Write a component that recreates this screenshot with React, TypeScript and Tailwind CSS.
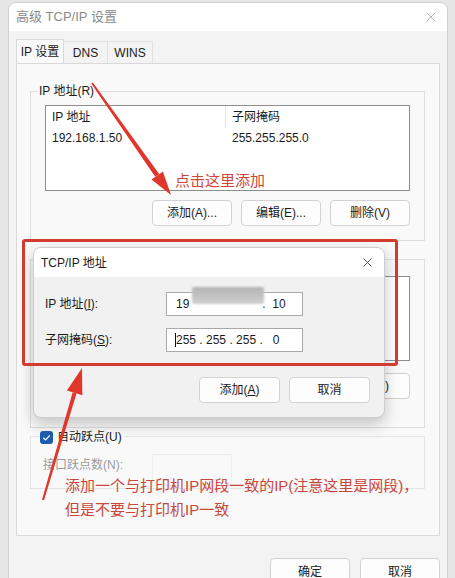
import { X } from "lucide-react";

const font = "font-['Liberation_Sans','Noto_Sans_CJK_SC',sans-serif]";

const Btn = ({ label, className = "" }: { label?: React.ReactNode; className?: string }) => (
  <div
    className={`w-[80px] h-[26px] flex items-center justify-center rounded-[4px] border border-[#d2d2d2] bg-[#fdfdfd] text-[12px] text-[#1b1b1b] ${className}`}
  >
    {label}
  </div>
);

const Annotations = () => (
  <>
    {/* red box round the dialog fields */}
    <div className="absolute left-[22px] top-[239px] w-[376px] h-[127px] border-[3px] border-[#d23b30] rounded-[3px] pointer-events-none" />

    <svg className="absolute inset-0 pointer-events-none" width="455" height="578" viewBox="0 0 455 578">
      {/* arrow to the add button */}
      <polygon points="91.2,83.6 92.8,82.4 159.2,174.0 155.2,176.8" fill="#e0362b" />
      <polygon points="151.5,179.4 171,195 162.9,171.4" fill="#e0362b" />
      {/* arrow up to the red box */}
      <polygon points="42,499.7 44,500.3 76.5,393.4 72.7,392.3" fill="#e0362b" />
      <polygon points="66.9,390.6 82,368 82.3,395.2" fill="#e0362b" />
    </svg>

    <div className="absolute left-[175px] top-[171px] text-[15px] leading-[20px] text-[#d0463b]">点击这里添加</div>
    <div className="absolute left-[65px] top-[474px] text-[15px] leading-[24px] text-[#c9463c]">
      <div>添加一个与打印机IP网段一致的IP(注意这里是网段)，</div>
      <div>但是不要与打印机IP一致</div>
    </div>
  </>
);

const AddressDialog = () => (
  <div className="absolute left-[33px] top-[247px] w-[352px] h-[171px] flex flex-col rounded-[8px] border border-[#cdcdcd] bg-[#f1f1f1] shadow-[0_6px_16px_rgba(0,0,0,0.22)] overflow-hidden">
    <div className="h-[29px] shrink-0 bg-white flex items-center justify-between pl-[7px] pr-[9px]">
      <span className="text-[12px] text-[#1b1b1b]">TCP/IP 地址</span>
      <X size={15} strokeWidth={1.3} className="text-[#333]" />
    </div>
    <div className="flex flex-col px-[11px] pt-[15px]">
      <div className="flex items-center">
        <span className="w-[121px] text-[12px] text-[#1b1b1b]">
          IP 地址(<span className="underline">I</span>):
        </span>
        <div className="relative w-[137px] h-[24px] border border-[#a9a9a9] bg-white flex items-center pl-[9px] text-[12px] text-[#1b1b1b]">
          <span>19</span>
          <span className="ml-[73px]">.&nbsp;&nbsp;10</span>
          <div className="absolute left-[25px] top-[-6px] w-[72px] h-[17px] rounded-[2px] bg-gradient-to-b from-[#b4b4b4] to-[#cfcfcf] blur-[1px]" />
        </div>
      </div>
      <div className="flex items-center mt-[12px]">
        <span className="w-[121px] text-[12px] text-[#1b1b1b]">
          子网掩码(<span className="underline">S</span>):
        </span>
        <div className="w-[137px] h-[24px] border border-[#a9a9a9] bg-white flex items-center pl-[8px] text-[12px] text-[#1b1b1b] whitespace-pre">
          <span className="w-px h-[14px] bg-[#111]" />
          <span>255 . 255 . 255 .   0</span>
        </div>
      </div>
      <div className="flex justify-end gap-[9px] mt-[25px] pr-[3px]">
        <Btn label={<>添加(<span className="underline">A</span>)</>} className="w-[81px] border-[#7d9db6]" />
        <Btn label="取消" className="w-[81px]" />
      </div>
    </div>
  </div>
);

const GroupLabel = ({ children }: { children: React.ReactNode }) => (
  <span className="absolute left-[7px] -top-[9px] bg-[#f9f9f9] px-[1px] text-[12px] leading-[16px] text-[#1b1b1b]">
    {children}
  </span>
);

export default function App() {
  return (
    <div className={`relative w-[455px] h-[578px] overflow-hidden bg-[#e6e6e6] pl-[8px] pt-[2px] ${font}`}>
      <div className="w-[440px] h-[600px] flex flex-col rounded-t-[8px] border border-[#cfcfcf] bg-[#f3f3f3] overflow-hidden">
        {/* title bar */}
        <div className="h-[28px] shrink-0 bg-white flex items-center justify-between pl-[7px] pr-[8px]">
          <span className="text-[13px] text-[#8a8a8a]">高级 TCP/IP 设置</span>
          <X size={16} strokeWidth={1.1} className="text-[#9a9a9a]" />
        </div>

        <div className="flex flex-col px-[7px]">
          {/* tabs */}
          <div className="flex items-end mt-[8px] h-[24px]">
            <div className="h-[24px] w-[48px] flex items-center justify-center border border-b-0 border-[#d9d9d9] bg-[#f9f9f9] text-[12px] text-[#1b1b1b]">
              IP 设置
            </div>
            <div className="h-[22px] w-[44px] flex items-center justify-center border border-l-0 border-b-0 border-[#e1e1e1] text-[12px] text-[#1b1b1b]">
              DNS
            </div>
            <div className="h-[22px] w-[45px] flex items-center justify-center border border-l-0 border-b-0 border-[#e1e1e1] text-[12px] text-[#1b1b1b]">
              WINS
            </div>
          </div>

          {/* tab panel */}
          <div className="h-[473px] flex flex-col border border-[#d9d9d9] bg-[#f9f9f9] pl-[13px] pr-[14px]">
            {/* IP addresses */}
            <div className="relative mt-[27px] h-[150px] border border-[#dedede] px-[14px] pt-[13px]">
              <GroupLabel>IP 地址(R)</GroupLabel>
              <div className="h-[86px] border border-[#8e8e8e] bg-white text-[12px] text-[#1b1b1b]">
                <div className="flex h-[22px] items-center">
                  <span className="w-[180px] pl-[6px] border-r border-[#e3e3e3] h-full flex items-center">IP 地址</span>
                  <span className="pl-[6px]">子网掩码</span>
                </div>
                <div className="flex h-[20px] items-center">
                  <span className="w-[180px] pl-[6px]">192.168.1.50</span>
                  <span className="pl-[6px]">255.255.255.0</span>
                </div>
              </div>
              <div className="flex justify-end gap-[9px] mt-[9px]">
                <Btn label="添加(A)..." />
                <Btn label="编辑(E)..." />
                <Btn label="删除(V)" />
              </div>
            </div>

            {/* gateways, mostly covered by the dialog */}
            <div className="mt-[18px] h-[169px] border border-[#dedede] px-[14px] pt-[16px]">
              <div className="h-[85px] border border-[#8e8e8e] bg-white" />
              <div className="flex justify-end gap-[9px] mt-[12px]">
                <Btn className="h-[25px]" />
                <Btn className="h-[25px]" />
                <Btn className="h-[25px] justify-end pr-[20px]" label=")" />
              </div>
            </div>

            {/* metric */}
            <div className="relative mt-[8px] h-[53px] border border-[#e4e4e4] pl-[12px] pt-[19px] flex items-start">
              <span className="absolute left-[9px] -top-[8px] flex items-center gap-[4px] bg-[#f9f9f9] pr-[2px] text-[12px] leading-[16px] text-[#1b1b1b]">
                <span className="w-[13px] h-[13px] rounded-[3px] bg-[#1d5cae] flex items-center justify-center">
                  <svg width="9" height="9" viewBox="0 0 10 10">
                    <path d="M1.5 5.2 L4 7.6 L8.6 2.6" fill="none" stroke="white" strokeWidth="1.4" />
                  </svg>
                </span>
                自动跃点(U)
              </span>
              <span className="w-[109px] text-[12px] text-[#9c9c9c]">接口跃点数(N):</span>
              <div className="w-[80px] h-[32px] -mt-[2px] border border-[#eeeeee]" />
            </div>
          </div>

          {/* OK / Cancel */}
          <div className="flex justify-end gap-[10px] mt-[22px]">
            <Btn label="确定" className="h-[28px]" />
            <Btn label="取消" className="h-[28px]" />
          </div>
        </div>
      </div>

      <AddressDialog />
      <Annotations />
    </div>
  );
}
